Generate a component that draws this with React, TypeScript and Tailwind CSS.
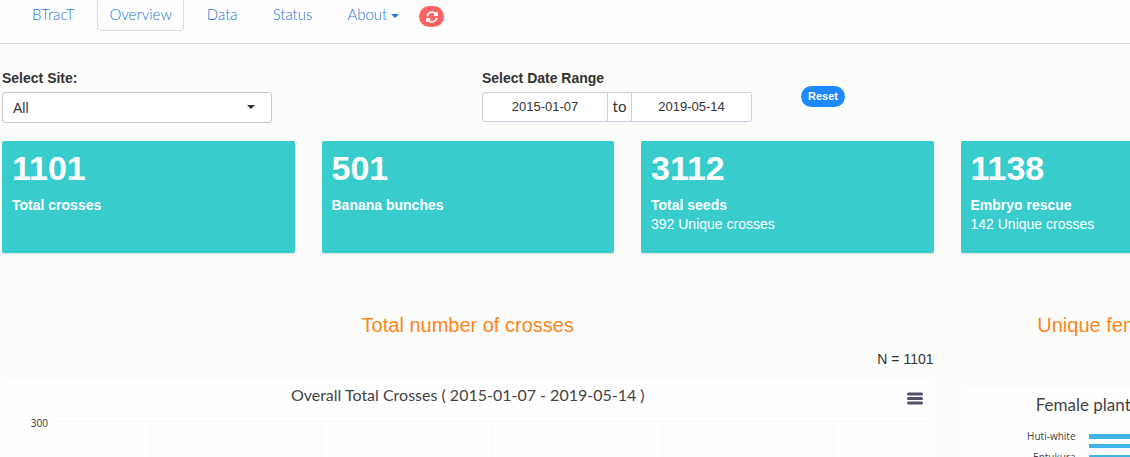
import { FaSyncAlt } from "react-icons/fa";

const sans = "font-['Liberation_Sans',Arial,sans-serif]";
const lato = "font-['Lato',sans-serif]";

const navLinks = [
  { label: "BTracT", active: false },
  { label: "Overview", active: true },
  { label: "Data", active: false },
  { label: "Status", active: false },
];

const stats = [
  { value: "1101", label: "Total crosses", note: "" },
  { value: "501", label: "Banana bunches", note: "" },
  { value: "3112", label: "Total seeds", note: "392 Unique crosses" },
  { value: "1138", label: "Embryo rescue", note: "142 Unique crosses" },
];

const gridLines = ["11.3%", "30.9%", "50.4%", "69.9%", "89.5%"];

function Caret({ className }: { className: string }) {
  return (
    <svg viewBox="0 0 8 4" className={className} aria-hidden="true">
      <path d="M0 0h8L4 4z" fill="currentColor" />
    </svg>
  );
}

function NavBar() {
  return (
    <nav className={`flex h-11 items-start border-b border-[#dcdcdc] bg-[#fefefe] pl-5 text-[15px] leading-7 font-light text-[#2a72e0] ${lato}`}>
      <div className="flex gap-[11px]">
        {navLinks.map((l) => (
          <a
            key={l.label}
            href="#"
            className={
              l.active
                ? "h-[31px] rounded-b border-x border-b border-[#dcdcdc] px-[11px]"
                : "h-[31px] px-3"
            }
          >
            {l.label}
          </a>
        ))}
        <button type="button" className="flex h-7 items-center gap-1 px-3">
          About
          <Caret className="mt-1 h-1 w-2" />
        </button>
      </div>
      <button type="button" aria-label="Refresh" className="mt-1.5 ml-2 flex h-[21px] w-[25px] items-center justify-center rounded-full bg-[#ff6463] text-white">
        <FaSyncAlt className="size-3" />
      </button>
    </nav>
  );
}

function Filters() {
  return (
    <form className="grid grid-cols-[480px_319px_1fr] pt-6 text-sm text-[#333]">
      <div>
        <label htmlFor="site" className="block h-6 font-bold leading-5">Select Site:</label>
        <div className="relative w-[270px]">
          <select id="site" className="block h-[31px] w-full appearance-none rounded-[3px] border border-[#c8c8c8] bg-white px-2.5">
            <option>All</option>
          </select>
          <Caret className="pointer-events-none absolute top-[13px] right-[17px] h-1 w-2" />
        </div>
      </div>
      <div>
        <label htmlFor="from" className="block h-6 font-bold leading-5">Select Date Range</label>
        <div className="flex h-[30px] w-[270px] overflow-hidden rounded-[3px] border border-[#cfcfdb] bg-white">
          <input id="from" type="text" defaultValue="2015-01-07" className="min-w-0 flex-1 text-center text-[13px]" />
          <span className={`flex w-[25px] items-center justify-center border-x border-[#cfcfdb] text-[15px] ${lato}`}>to</span>
          <input type="text" aria-label="End date" defaultValue="2019-05-14" className="w-[119px] text-center text-[13px]" />
        </div>
      </div>
      <div>
        <button type="button" className="mt-[18px] h-[21px] rounded-full bg-[#1e88ff] px-[7px] text-[11px] font-bold text-white">Reset</button>
      </div>
    </form>
  );
}

function TotalChart() {
  return (
    <section className="col-span-3">
      <h2 className="text-center text-xl leading-6 text-[#ff851b]">Total number of crosses</h2>
      <p className="mt-3 text-right text-sm leading-5 text-[#333]">N = 1101</p>
      <div className="mt-3 bg-[#fefefe]">
        <div className="relative flex h-8 justify-center">
          <h3 className={`text-base leading-7 text-[#444] ${lato}`}>Overall Total Crosses ( 2015-01-07 - 2019-05-14 )</h3>
          <button type="button" aria-label="Chart menu" className="absolute top-[11px] right-[11px] text-[#50506a]">
            <svg viewBox="0 0 16 13" className="block h-[13px] w-4" stroke="currentColor" strokeWidth="3" strokeLinecap="round">
              <path d="M1.500 2h13M1.500 6.500h13M1.500 11h13" />
            </svg>
          </button>
        </div>
        <div className="flex pr-2">
          <span className="w-[50px] pt-0.5 pr-1 text-right font-['Open_Sans',sans-serif] text-[10px] leading-4 text-[#333]">300</span>
          <svg className="mt-[7px] h-72 min-w-0 flex-1" stroke="#f5f5f5" shapeRendering="crispEdges" aria-hidden="true">
            <line x1="0" x2="100%" y1="1" y2="1" />
            {gridLines.map((x) => (
              <line key={x} x1={x} x2={x} y1="1" y2="100%" />
            ))}
          </svg>
        </div>
      </div>
    </section>
  );
}

function FemaleChart() {
  return (
    <section className="min-w-0">
      <h2 className="text-center text-xl leading-6 whitespace-nowrap text-[#ff851b]">Unique females</h2>
      <div className="mt-[52px] bg-[#fefefe]">
        <h3 className={`pt-0.5 text-center text-[17px] leading-7 text-[#444] ${lato}`}>Female plants used</h3>
        <div className="mt-[7px] flex">
          <ul className="w-[115px] text-right font-['Open_Sans',sans-serif] text-[10px] leading-[21px] text-[#444]">
            <li>Huti-white</li>
            <li>Entukura</li>
          </ul>
          <svg className="ml-[13px] h-72 min-w-0 flex-1" fill="#3fb3e8" shapeRendering="crispEdges" aria-hidden="true">
            <rect y="8" width="90%" height="5" />
            <rect y="18" width="80%" height="4" />
            <rect y="29" width="70%" height="4" />
          </svg>
        </div>
      </div>
    </section>
  );
}

export default function App() {
  return (
    <div className={`h-screen overflow-hidden bg-[#fcfcfa] ${sans}`}>
      <NavBar />
      <main className="w-full min-w-[1253px] pl-[2px]">
        <Filters />
        <div className="mt-[18px] grid grid-cols-4 gap-[27px]">
          {stats.map((s) => (
            <article key={s.label} className="h-28 rounded-[2px] bg-[#39cccc] px-2.5 pt-2 text-white shadow-[0_1px_1px_rgba(0,0,0,0.1)]">
              <p className="text-[34px] leading-[38px] font-bold">{s.value}</p>
              <p className="mt-2 text-sm leading-5 font-bold">{s.label}</p>
              <p className="text-sm leading-[18px]">{s.note}</p>
            </article>
          ))}
        </div>
        <div className="mt-[60px] grid grid-cols-4 gap-[27px]">
          <TotalChart />
          <FemaleChart />
        </div>
      </main>
    </div>
  );
}
